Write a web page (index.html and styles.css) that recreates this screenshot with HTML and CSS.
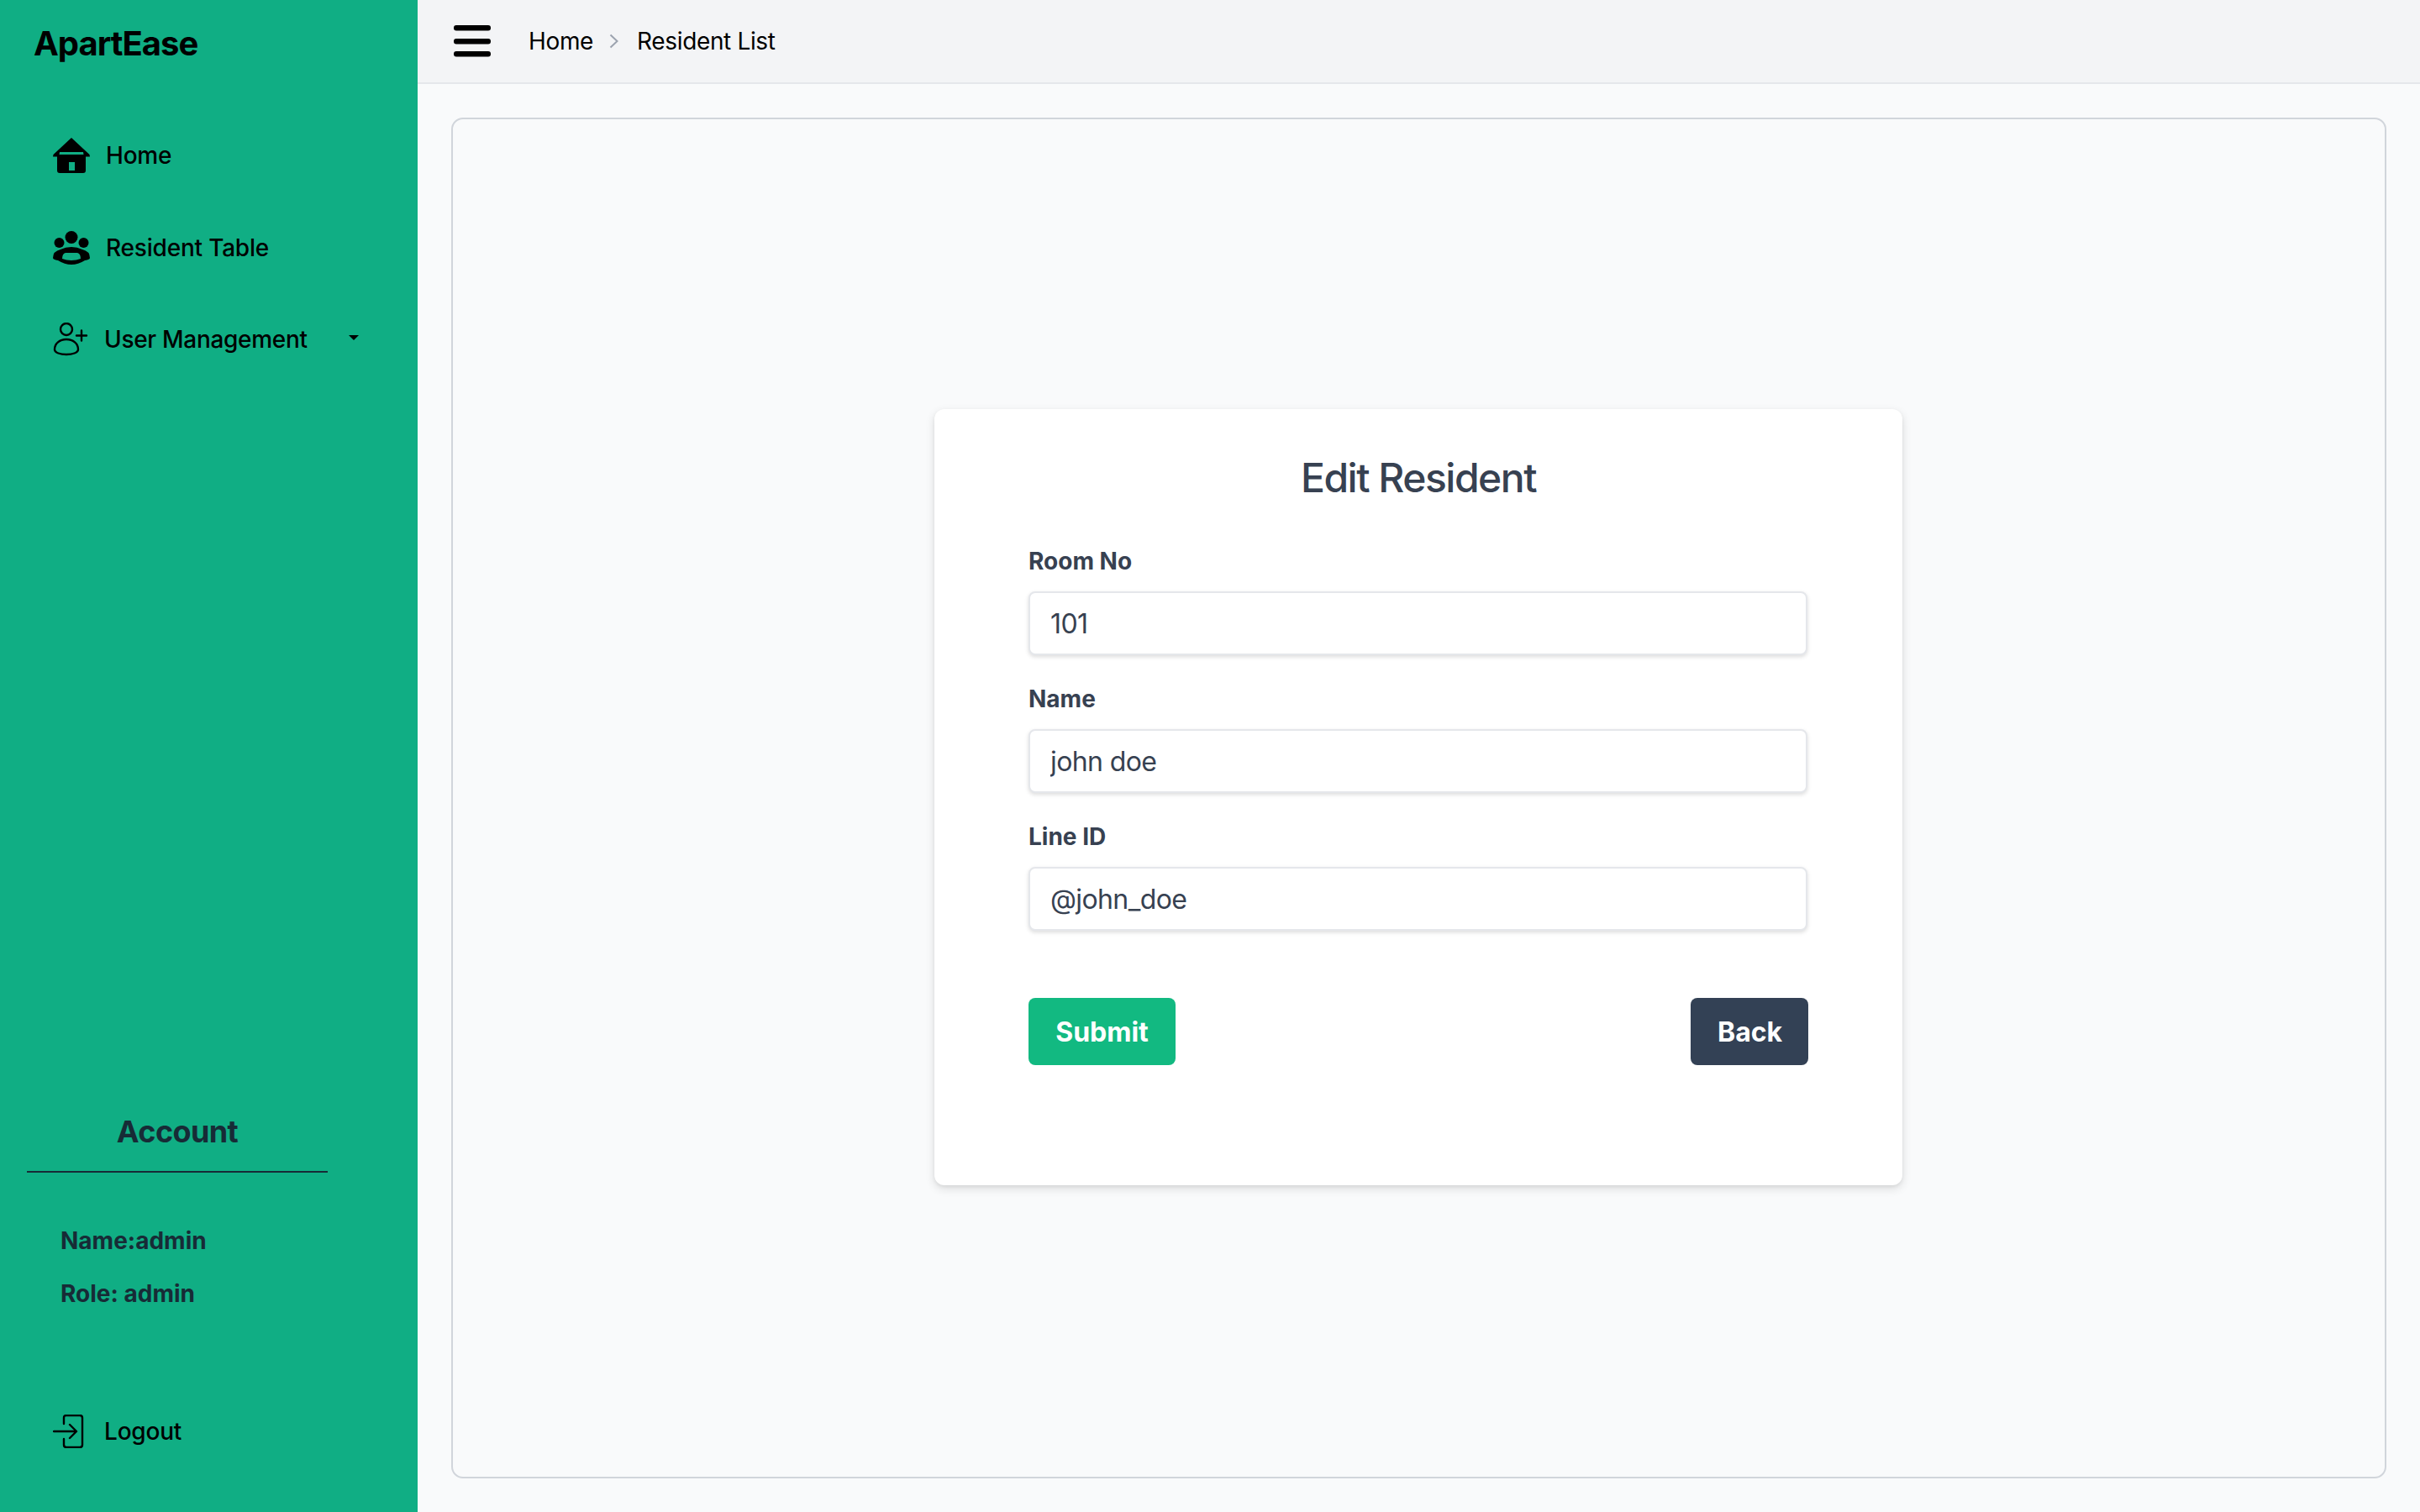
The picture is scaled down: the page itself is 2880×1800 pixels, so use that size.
FILE: index.html
```html
<!DOCTYPE html>
<html lang="en">

<head>
    <meta charset="UTF-8">
    <meta name="viewport" content="width=device-width, initial-scale=1.0">
    <title>Edit Resident</title>
    <link rel="stylesheet" href="styles.css">
</head>

<body>
    <aside class="sidebar">
        <div class="brand">ApartEase</div>
        <nav class="nav">
            <a class="nav-item" href="#">
                <svg class="nav-icon" width="44" height="42" viewBox="0 0 44 42">
                    <path fill="#000" fill-rule="evenodd" d="M22 0 L43.500 20 L44 22.500 L0 22.500 L.5 20 Z M8 17 L7.500 20 L36.500 20 L36 17 Z" />
                    <path fill="#000" fill-rule="evenodd" d="M5 22 H39 V39 Q39 42 36 42 H8 Q5 42 5 39 Z M19 29 V39 H26 V29 Z" />
                </svg>
                <span class="nav-label">Home</span>
            </a>
            <a class="nav-item" href="#">
                <svg class="nav-icon" width="44" height="40" viewBox="0 0 44 40">
                    <circle cx="22" cy="7.500" r="7.500" fill="#000" />
                    <circle cx="7.500" cy="14" r="6" fill="#000" />
                    <circle cx="36.500" cy="14" r="6" fill="#000" />
                    <path fill="#000" fill-rule="evenodd" d="M9 22 Q15 19 22 19 Q29 19 35 22 Q44 24 44 32 Q44 34 38 35 Q30 40 22 40 Q14 40 6 35 Q0 34 0 32 Q0 24 9 22 Z M15 26 Q11 27 11 33 Q16 35 22 35 Q28 35 33 33 Q33 27 29 26 Z" />
                </svg>
                <span class="nav-label">Resident Table</span>
            </a>
            <a class="nav-item nav-item-tight" href="#">
                <svg class="nav-icon" width="44" height="40" viewBox="0 0 44 40" fill="none" stroke="#000" stroke-width="2.400">
                    <circle cx="16" cy="8" r="7" />
                    <path d="M2 32 C2 25 8 20 16 20 C24 20 30 25 30 32 C30 36 23 38 16 38 C9 38 2 36 2 32 Z" />
                    <path d="M28 15.500 H40 M34 9.500 V21.500" stroke-linecap="round" />
                </svg>
                <span class="nav-label nav-label-long">User Management</span>
                <span class="caret"></span>
            </a>
        </nav>
        <div class="account">
            <h3 class="account-title">Account</h3>
            <p class="account-line">Name:admin</p>
            <p class="account-line">Role: admin</p>
        </div>
        <a class="nav-item nav-item-tight logout" href="#">
            <svg class="nav-icon" width="44" height="40" viewBox="0 0 44 40" fill="none" stroke="#000" stroke-width="2.400" stroke-linecap="round" stroke-linejoin="round">
                <path d="M13 11 V4 Q13 1 16 1 H32 Q35 1 35 4 V36 Q35 39 32 39 H16 Q13 39 13 36 V29" />
                <path d="M1 20 H27 M20 12 L28 20 L20 28" />
            </svg>
            <span class="nav-label">Logout</span>
        </a>
    </aside>

    <div class="page">
        <header class="topbar">
            <svg class="menu-icon" width="44" height="38" viewBox="0 0 44 38">
                <rect x="0" y="0" width="44" height="6.500" rx="3" fill="#000" />
                <rect x="0" y="16" width="44" height="6.500" rx="3" fill="#000" />
                <rect x="0" y="31" width="44" height="6.500" rx="3" fill="#000" />
            </svg>
            <span class="crumb">Home</span>
            <svg class="crumb-sep" width="12" height="18" viewBox="0 0 12 18" fill="none" stroke="#9ca3af" stroke-width="2">
                <path d="M1.500 1.500 L9.500 9 L1.500 16.500" />
            </svg>
            <span class="crumb">Resident List</span>
        </header>
        <main class="content">
            <div class="panel">
                <form class="card">
                    <h2 class="card-title">Edit Resident</h2>
                    <label class="field-label" for="roomNo">Room No</label>
                    <input class="field-input" type="text" id="roomNo" value="101">
                    <label class="field-label" for="name">Name</label>
                    <input class="field-input" type="text" id="name" value="john doe">
                    <label class="field-label" for="lineId">Line ID</label>
                    <input class="field-input" type="text" id="lineId" value="@john_doe">
                    <div class="actions">
                        <button class="btn btn-submit" type="submit">Submit</button>
                        <button class="btn btn-back" type="button">Back</button>
                    </div>
                </form>
            </div>
        </main>
    </div>
</body>

</html>
```
FILE: styles.css
```css
* {
    box-sizing: border-box;
}

body {
    font-family: Inter, "Noto Sans", sans-serif;
    margin: 0;
    width: 2880px;
    height: 1800px;
    display: flex;
    background-color: #f9fafb;
    overflow: hidden;
}

.sidebar {
    width: 497px;
    flex-shrink: 0;
    display: flex;
    flex-direction: column;
    background-color: #10ae84;
    color: #000;
}

.brand {
    font-size: 40px;
    font-weight: 700;
    line-height: 48px;
    letter-spacing: -1px;
    padding: 28px 0 0 40px;
}

.nav {
    display: flex;
    flex-direction: column;
    gap: 59.5px;
    margin-top: 84px;
    padding-left: 63px;
}

.nav-item {
    display: flex;
    align-items: center;
    height: 50px;
    color: #000;
    text-decoration: none;
}

.nav-icon {
    flex-shrink: 0;
    margin-right: 19px;
}

.nav-item-tight .nav-icon {
    margin-right: 17px;
}

.nav-label {
    font-size: 28px;
    font-weight: 500;
    letter-spacing: -0.2px;
}

.nav-label-long {
    letter-spacing: -0.3px;
}

.caret {
    width: 0;
    height: 0;
    margin-left: 49px;
    margin-bottom: 4px;
    border-left: 6px solid transparent;
    border-right: 6px solid transparent;
    border-top: 6px solid #000;
}

.account {
    margin-top: auto;
    color: #172b36;
}

.account-title {
    width: 358px;
    margin: 0 0 64px 32px;
    padding-bottom: 25px;
    border-bottom: 2px solid #172b36;
    font-size: 36px;
    font-weight: 700;
    line-height: 44px;
    letter-spacing: -0.6px;
    text-align: center;
}

.account-line {
    margin: 0 0 29px 72px;
    font-size: 28px;
    font-weight: 700;
    line-height: 34px;
}

.logout {
    margin: 93px 0 71px 63px;
}

.page {
    flex: 1;
    display: flex;
    flex-direction: column;
    min-width: 0;
}

.topbar {
    height: 100px;
    display: flex;
    align-items: center;
    padding-left: 43px;
    background-color: #f3f4f6;
    border-bottom: 2px solid #e5e7eb;
}

.menu-icon {
    margin-right: 45px;
}

.crumb {
    font-size: 28px;
    letter-spacing: -0.35px;
    color: #000;
}

.crumb-sep {
    margin: 0 21px 0 19px;
}

.content {
    flex: 1;
    padding: 40px;
}

.panel {
    height: 100%;
    display: flex;
    align-items: center;
    justify-content: center;
    border: 2px solid #d1d5db;
    border-radius: 14px;
}

.card {
    width: 1152px;
    height: 924px;
    padding: 54px 112px 0 112px;
    margin: -2px 1px 0 0;
    background-color: #fff;
    border-radius: 12px;
    box-shadow: 0 4px 12px rgba(0, 0, 0, 0.12), 0 2px 4px rgba(0, 0, 0, 0.06);
    color: #374151;
}

.card-title {
    margin: 0 0 51px;
    font-size: 48px;
    font-weight: 500;
    line-height: 56px;
    letter-spacing: -1.5px;
    text-align: center;
}

.field-label {
    display: block;
    margin-bottom: 16px;
    font-size: 28px;
    font-weight: 700;
    line-height: 40px;
}

.field-input {
    display: block;
    width: 927px;
    height: 76px;
    margin-bottom: 32px;
    padding: 0 24px;
    border: 2px solid #e5e7eb;
    border-radius: 8px;
    background-color: #fff;
    box-shadow: 0 2px 5px rgba(0, 0, 0, 0.14);
    font-family: inherit;
    font-size: 32px;
    letter-spacing: -0.6px;
    color: #374151;
}

.actions {
    display: flex;
    justify-content: space-between;
    width: 928px;
    margin-top: 80px;
}

.btn {
    height: 80px;
    padding: 0 32px;
    border: none;
    border-radius: 8px;
    font-family: inherit;
    font-size: 32px;
    font-weight: 700;
    color: #fff;
    cursor: pointer;
}

.btn-submit {
    width: 175px;
    background-color: #12b981;
}

.btn-back {
    width: 140px;
    background-color: #334155;
}
```
